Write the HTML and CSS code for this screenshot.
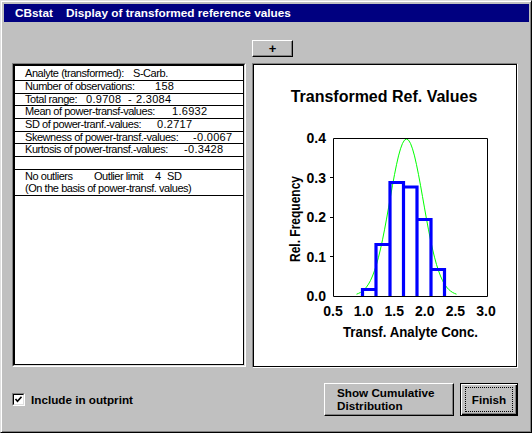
FILE: index.html
```html
<!DOCTYPE html>
<html>
<head>
<meta charset="utf-8">
<link rel="stylesheet" href="styles.css">
</head>
<body>
<div class="window">
  <div class="titlebar"><span class="app">CBstat</span><span class="caption">Display of transformed reference values</span></div>
  <div class="toolbar"><button class="btn plus">+</button></div>
  <div class="main">
    <div class="listbox"><div class="lb-inner"><div class="frame">
      <div class="row"><span class="tab t108">Analyte (transformed):</span>S-Carb.</div>
      <div class="row"><span class="tab t130">Number of observations:</span><span class="num">158</span></div>
      <div class="row"><span class="tab t61">Total range:</span><span class="tab t42 num">0.9708</span><span class="tab t8">-</span><span class="num">2.3084</span></div>
      <div class="row"><span class="tab t147">Mean of power-transf-values:</span><span class="num">1.6932</span></div>
      <div class="row"><span class="tab t132">SD of power-tranf.-values:</span><span class="num">0.2717</span></div>
      <div class="row"><span class="tab t168">Skewness of power-transf.-values:</span><span class="num">-0.0067</span></div>
      <div class="row"><span class="tab t159">Kurtosis of power-transf.-values:</span><span class="num">-0.3428</span></div>
      <div class="row"></div>
      <div class="row block"><span class="tab t69">No outliers</span><span class="tab t61">Outlier limit</span><span class="tab t12 num">4</span>SD<br>(On the basis of power-transf. values)</div>
    </div></div></div>
    <div class="chart"><div class="chart-inner">
      <svg class="plot" width="262" height="301" viewBox="254 65 262 301">
        <text class="ttl" x="384" y="102" text-anchor="middle">Transformed Ref. Values</text>
        <path class="curve" d="M356.5 294.2 L358.5 293.4 L360.5 292.4 L362.5 291 L364.5 289.3 L366.5 287 L368.5 284.1 L370.5 280.5 L372.5 276 L374.5 270.7 L376.5 264.5 L378.5 257.2 L380.5 249 L382.5 239.8 L384.5 229.8 L386.5 219.1 L388.5 207.9 L390.5 196.6 L392.5 185.3 L394.5 174.6 L396.5 164.7 L398.5 155.9 L400.5 148.8 L402.5 143.4 L404.5 140.1 L406.5 139 L408.5 140.1 L410.5 143.4 L412.5 148.8 L414.5 155.9 L416.5 164.7 L418.5 174.6 L420.5 185.3 L422.5 196.6 L424.5 207.9 L426.5 219.1 L428.5 229.8 L430.5 239.8 L432.5 249 L434.5 257.2 L436.5 264.5 L438.5 270.7 L440.5 276 L442.5 280.5 L444.5 284.1 L446.5 287 L448.5 289.3 L450.5 291 L452.5 292.4 L454.5 293.4 L456.5 294.2"/>
        <path class="bars" d="M362.5 296 V289.5 H376 V296 M376 296 V244.5 H390 V296 M390 296 V182.5 H403.5 V296 M403.5 296 V187 H417 V296 M417 296 V219.5 H431 V296 M431 296 V269.5 H444.5 V296"/>
        <path class="axes" d="M333.5 138.5 H487.5 V296.5 H333.5 Z M330 177.5 H333 M330 217.5 H333 M330 256.5 H333"/>
        <g class="lbl" text-anchor="end">
          <text x="326" y="143">0.4</text>
          <text x="326" y="183">0.3</text>
          <text x="326" y="222">0.2</text>
          <text x="326" y="262">0.1</text>
          <text x="326" y="301">0.0</text>
        </g>
        <g class="lbl" text-anchor="middle">
          <text x="333" y="316">0.5</text>
          <text x="363.6" y="316">1.0</text>
          <text x="394.2" y="316">1.5</text>
          <text x="424.8" y="316">2.0</text>
          <text x="455.4" y="316">2.5</text>
          <text x="486" y="316">3.0</text>
        </g>
        <text class="lbl" x="410.5" y="337" text-anchor="middle" textLength="135" lengthAdjust="spacingAndGlyphs">Transf. Analyte Conc.</text>
        <text class="lbl" x="300" y="219" text-anchor="middle" transform="rotate(-90 300 219)" textLength="86" lengthAdjust="spacingAndGlyphs">Rel. Frequency</text>
      </svg>
    </div></div>
  </div>
  <div class="footer">
    <label class="check"><span class="box"><span class="box-in"><svg width="9" height="9" viewBox="0 0 9 9"><path d="M1.5 4 L3.5 6.2 L7.5 1.8" fill="none" stroke="#000" stroke-width="1.7"/></svg></span></span>Include in outprint</label>
    <div class="actions">
      <button class="btn cum">Show Cumulative<br>Distribution</button>
      <button class="btn default"><span class="focus">Finish</span></button>
    </div>
  </div>
</div>
</body>
</html>
```
FILE: styles.css
```css
html, body {
  margin: 0;
  background: #c0c0c0;
  font-family: "Liberation Sans", Arial, sans-serif;
}
.window {
  width: 532px;
  height: 433px;
  box-sizing: border-box;
  border: 1px solid;
  border-color: #dfdfdf #000 #000 #dfdfdf;
  box-shadow: inset 1px 1px #fff, inset -1px -1px #808080;
  padding: 3px 2px 2px 3px;
  background: #c0c0c0;
}
.titlebar {
  height: 18px;
  background: #000080;
  color: #fff;
  font-weight: bold;
  font-size: 11.8px;
  display: flex;
  align-items: center;
  padding-left: 11px;
  white-space: pre;
}
.app { display: inline-block; width: 51px; }
.toolbar {
  display: grid;
  grid-template-columns: 234px 266px;
  column-gap: 6px;
  padding-left: 8px;
  margin-top: 18px;
}
.btn {
  box-sizing: border-box;
  background: #c0c0c0;
  border: 1px solid;
  border-color: #fff #000 #000 #fff;
  box-shadow: inset -1px -1px #808080;
  font-family: "Liberation Sans", Arial, sans-serif;
  font-weight: bold;
  font-size: 11.7px;
  color: #000;
  padding: 0;
  margin: 0;
}
.plus {
  grid-column: 2;
  width: 41px;
  height: 17px;
  font-size: 13px;
  line-height: 13px;
}
.main {
  display: grid;
  grid-template-columns: 234px 266px;
  column-gap: 6px;
  padding-left: 8px;
  margin-top: 6px;
  align-items: start;
}
.listbox {
  box-sizing: border-box;
  height: 304px;
  border: 1px solid;
  border-color: #808080 #fff #fff #808080;
}
.lb-inner {
  height: 100%;
  box-sizing: border-box;
  border: 1px solid;
  border-color: #000 #dfdfdf #dfdfdf #000;
  background: #fff;
}
.frame {
  height: 100%;
  box-sizing: border-box;
  border: 1px solid #000;
  padding-top: 2.33px;
  font-size: 11px;
  color: #000;
}
.row {
  height: 11.67px;
  line-height: 10px;
  border-bottom: 1px solid #000;
  padding-left: 10px;
  white-space: pre;
  letter-spacing: -0.45px;
}
.row.block {
  height: 25.33px;
  line-height: 12px;
}
.tab { display: inline-block; }
.num { letter-spacing: 0.3px; }
.t8 { width: 8px; }
.t12 { width: 12px; }
.t42 { width: 42px; }
.t61 { width: 61px; }
.t69 { width: 69px; }
.t108 { width: 108px; }
.t130 { width: 130px; }
.t132 { width: 132px; }
.t147 { width: 147px; }
.t159 { width: 159px; }
.t168 { width: 168px; }
.chart {
  box-sizing: border-box;
  height: 305px;
  border: 1px solid;
  border-color: #808080 #fff #fff #808080;
}
.chart-inner {
  height: 100%;
  box-sizing: border-box;
  border: 1px solid #000;
  background: #fff;
}
.plot { display: block; }
.ttl {
  font-family: "Liberation Sans", Arial, sans-serif;
  font-weight: bold;
  font-size: 16px;
  fill: #000;
}
.lbl, .lbl text {
  font-family: "Liberation Sans", Arial, sans-serif;
  font-weight: bold;
  font-size: 14px;
  fill: #000;
}
.curve { fill: none; stroke: #00ff00; stroke-width: 1; }
.bars { fill: none; stroke: #0000ff; stroke-width: 3.2; }
.axes { fill: none; stroke: #000; stroke-width: 1; }
.footer {
  display: flex;
  align-items: center;
  height: 33px;
  margin-top: 15px;
  padding: 0 11px 0 8px;
}
.check {
  display: flex;
  align-items: center;
  font-weight: bold;
  font-size: 11.7px;
  color: #000;
}
.box {
  width: 13px;
  height: 13px;
  box-sizing: border-box;
  border: 1px solid;
  border-color: #808080 #fff #fff #808080;
  margin-right: 6px;
}
.box-in {
  display: block;
  height: 100%;
  box-sizing: border-box;
  border: 1px solid;
  border-color: #000 #dfdfdf #dfdfdf #000;
  background: #fff;
}
.box-in svg { display: block; }
.actions {
  margin-left: auto;
  display: flex;
  gap: 6px;
}
.cum {
  width: 130px;
  height: 33px;
  text-align: left;
  padding-left: 12px;
  line-height: 12.4px;
}
.default {
  width: 58px;
  height: 33px;
  border: 1px solid #000;
  box-shadow: inset 1px 1px #fff, inset -1px -1px #000, inset -2px -2px #808080;
  display: flex;
  align-items: center;
  justify-content: center;
}
.focus {
  display: flex;
  align-items: center;
  justify-content: center;
  box-sizing: border-box;
  width: 48px;
  height: 25px;
  border: 1px dotted #000;
  margin-top: -1px;
}
```
